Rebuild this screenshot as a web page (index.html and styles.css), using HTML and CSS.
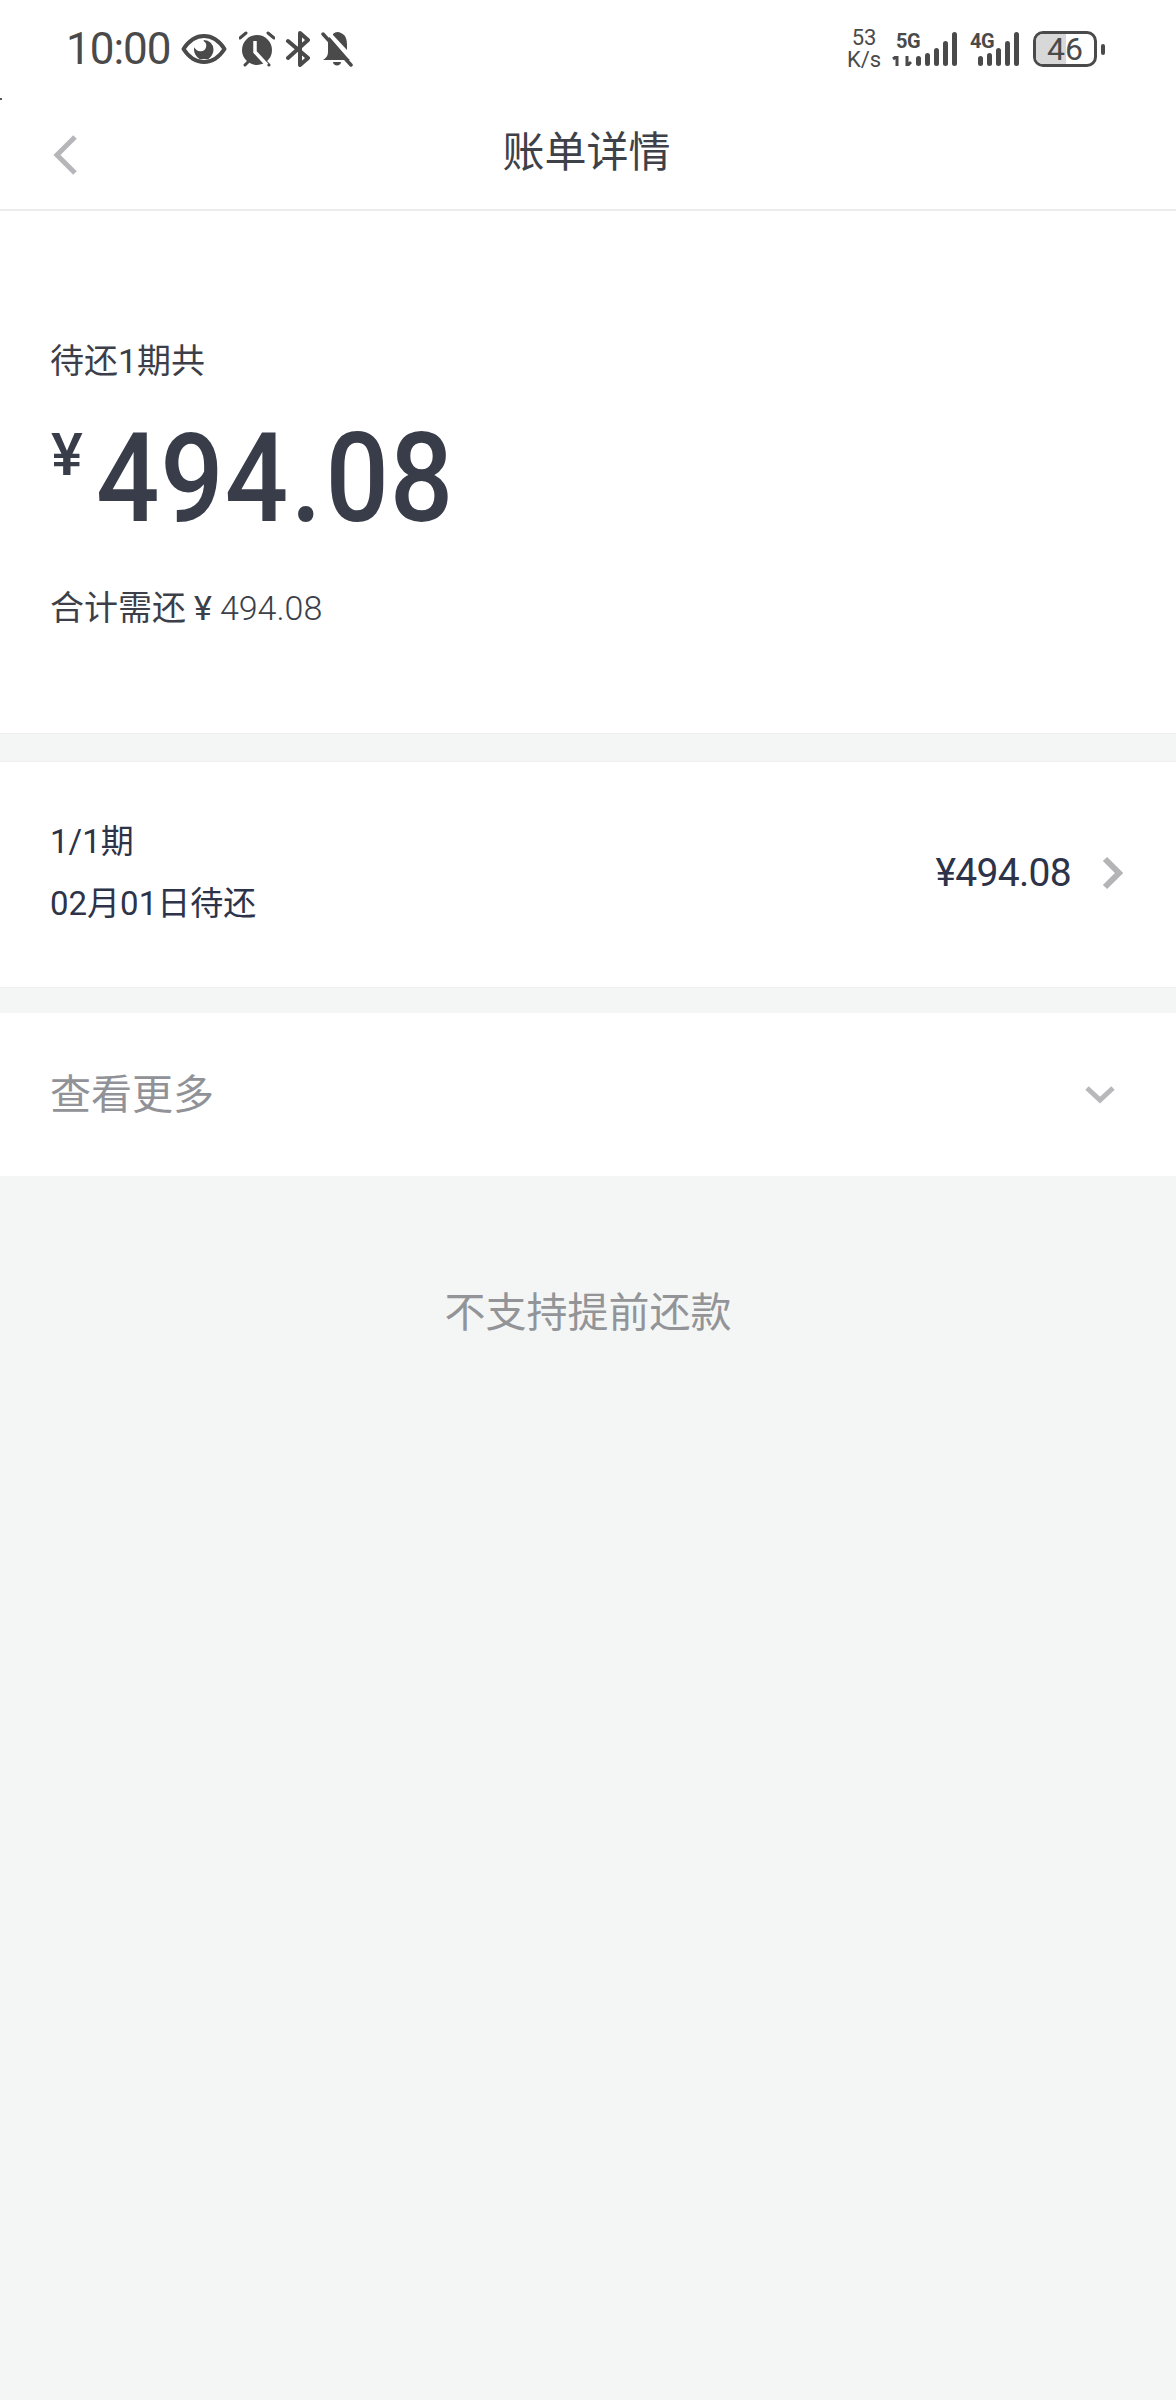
FILE: index.html
```html
<!DOCTYPE html>
<html lang="zh-CN">
<head>
<meta charset="utf-8">
<title>账单详情</title>
<link rel="stylesheet" href="styles.css">
</head>
<body>
<div class="page">
  <i class="tick"></i>
  <div class="status">
    <span class="time">10:00</span>
    <svg class="ic eye" viewBox="0 0 46 32" width="46" height="32"><path d="M2.500 16C8 7.500 15 3 23 3s15 4.500 20.500 13C38 24.500 31 29 23 29S8 24.500 2.500 16z" fill="none" stroke="#4a4a4a" stroke-width="4" stroke-linejoin="round"/><path d="M23 7a9.500 9.500 0 0 1 9.500 9.500c0 3.700-2 7-5 9.500h-9c-3.500-2.500-5.500-5.500-5.500-9.500 0-.8.100-1.500.3-2.200 1 2.400 3.200 3.900 5.700 3.900a5.500 5.500 0 0 0 3.500-10.200z" fill="#4a4a4a"/></svg>
    <svg class="ic alarm" viewBox="0 0 36 36" width="36" height="36"><circle cx="18" cy="19" r="15" fill="#4a4a4a"/><path d="M1 7l6-5M35 7l-6-5M6 34l3-3M30 34l-3-3" stroke="#4a4a4a" stroke-width="3" stroke-linecap="round"/><path d="M16 10v11l12 13" fill="none" stroke="#fff" stroke-width="3.500"/></svg>
    <svg class="ic bt" viewBox="0 0 24 36" width="24" height="36"><path d="M2 10l20 17-8 7V2l8 7L2 27" fill="none" stroke="#4a4a4a" stroke-width="4" stroke-linecap="round" stroke-linejoin="round"/></svg>
    <svg class="ic bell" viewBox="0 0 32 36" width="32" height="36"><path d="M7 11c0-2 .5-3.500 1.500-5L25 25c1 1.500 3 3 4 4H2c3-2 5-4 5-8zM12 3c2-2 5-3 8-1 5 2 6 7 6 12v5L12 4zM12 31h8c0 2-2 3.500-4 3.500S12 33 12 31z" fill="#4a4a4a"/><path d="M2 3l28 31" stroke="#4a4a4a" stroke-width="3.500" stroke-linecap="round"/></svg>
    <span class="spacer"></span>
    <div class="speed"><span>53</span><span>K/s</span></div>
    <div class="net net5">
      <span class="gen">5G</span>
      <svg class="arrows" viewBox="0 0 20 10" width="20" height="10"><path d="M5 0v10M1 3l4-3M15 0v10l4-4" fill="none" stroke="#4a4a4a" stroke-width="3"/></svg>
      <div class="bars"><i class="b1"></i><i class="b2"></i><i class="b3"></i><i class="b4"></i><i class="b5"></i></div>
    </div>
    <div class="net net4">
      <span class="gen">4G</span>
      <div class="bars"><i class="b1"></i><i class="b2"></i><i class="b3"></i><i class="b4"></i><i class="b5"></i></div>
    </div>
    <div class="battery"><div class="cell"><i class="fill"></i><span class="lvl">46</span></div><i class="nub"></i></div>
  </div>

  <header class="nav">
    <svg class="back" viewBox="0 0 26 42" width="26" height="42"><path d="M23 3L5 21l18 18" fill="none" stroke="#b6b6ba" stroke-width="5"/></svg>
    <h1 class="title">账单详情</h1>
  </header>

  <section class="summary">
    <p class="due">待还1期共</p>
    <div class="amount"><span class="yen">¥</span><span class="num">494<span class="dot">.</span>08</span></div>
    <p class="total">合计需还<span class="tyen">¥</span><span class="tnum">494.08</span></p>
  </section>

  <section class="bill">
    <div class="bill-left">
      <p class="period">1/1期</p>
      <p class="date">02月01日待还</p>
    </div>
    <span class="bill-amt">¥494.08</span>
    <svg class="chev-r" viewBox="0 0 22 34" width="22" height="34"><path d="M4 3l14 14L4 31" fill="none" stroke="#b4b4b6" stroke-width="6"/></svg>
  </section>

  <section class="more">
    <span class="more-label">查看更多</span>
    <svg class="chev-d" viewBox="0 0 30 20" width="30" height="20"><path d="M2 3l13 12L28 3" fill="none" stroke="#b8b8ba" stroke-width="5"/></svg>
  </section>

  <p class="notice">不支持提前还款</p>
</div>
</body>
</html>
```
FILE: styles.css
```css
* { box-sizing: border-box; }
html, body { margin: 0; padding: 0; }
body {
  background: #f4f6f6;
  font-family: Roboto, "Noto Sans CJK SC", sans-serif;
}
p, h1 { margin: 0; font-weight: 400; }
.page { position: relative; width: 1176px; height: 2400px; overflow: hidden; background: #f4f6f6; }
.tick { position: absolute; left: 0; top: 98px; width: 2px; height: 2px; background: #555; }

.status {
  height: 100px;
  background: #fff;
  display: flex;
  align-items: center;
  padding: 0 71px 2px 66px;
  color: #4a4a4a;
}
.time { font-size: 44px; font-weight: 400; letter-spacing: -1px; width: 102px; line-height: 50px; }
.ic { display: block; flex: none; }
.eye { margin-left: 13px; }
.alarm { margin-left: 12px; }
.bt { margin-left: 11px; }
.bell { margin-left: 11px; }
.spacer { flex: 1; }
.speed { display: flex; flex-direction: column; align-items: center; width: 36px; font-size: 22px; line-height: 22px; margin-right: 14px; }
.net { position: relative; height: 34px; }
.net5 { width: 61px; margin-right: 13px; }
.net4 { width: 49px; margin-right: 14px; }
.gen { position: absolute; left: 0; top: -1px; font-size: 20px; line-height: 20px; font-weight: 700; letter-spacing: -0.5px; }
.arrows { position: absolute; left: -4px; bottom: 0; }
.bars { position: absolute; right: 0; bottom: 0; display: flex; align-items: flex-end; gap: 4px; }
.bars i { display: block; width: 5px; background: #4a4a4a; border-radius: 3px; }
.bars .b1 { height: 10px; }
.bars .b2 { height: 13px; }
.bars .b3 { height: 18px; }
.bars .b4 { height: 25px; }
.bars .b5 { height: 34px; }
.battery { display: flex; align-items: center; gap: 4px; }
.cell { position: relative; width: 64px; height: 36px; border: 3px solid #4a4a4a; border-radius: 10px; overflow: hidden; display: flex; align-items: center; justify-content: center; }
.fill { position: absolute; left: 0; top: 0; bottom: 0; width: 30px; background: #d8d8d8; }
.lvl { position: relative; font-size: 32px; line-height: 30px; font-weight: 400; }
.nub { display: block; width: 4px; height: 11px; background: #4a4a4a; border-radius: 2px; }

.nav {
  height: 111px;
  background: #fff;
  border-bottom: 2px solid #ececec;
  display: flex;
  align-items: center;
  justify-content: center;
  position: relative;
}
.back { position: absolute; left: 52px; top: 34px; }
.title { font-size: 42px; line-height: 100px; color: #3e4149; padding: 0 3px 4px 0; }

.summary {
  height: 523px;
  background: #fff;
  border-bottom: 1px solid #eeeeee;
  padding: 125px 50px 0;
  color: #3c3f49;
}
.due { font-size: 34px; line-height: 50px; }
.amount { display: flex; align-items: flex-start; margin-top: 31px; color: #383d49; }
.yen { font-size: 60px; line-height: 70px; font-weight: 500; width: 46px; margin-top: 3px; padding-left: 1px; }
.num { display: block; font-size: 124px; line-height: 124px; font-weight: 500; letter-spacing: 1px; transform: scaleX(0.9); transform-origin: left center; white-space: nowrap; }
.dot { margin: 0 3px 0 2px; }
.total { font-size: 34px; line-height: 50px; margin-top: 42px; }
.tyen { margin: 0 8px; }
.tnum { font-weight: 300; }

.bill {
  margin-top: 27px;
  height: 227px;
  background: #fff;
  border-top: 1px solid #eeeeee;
  border-bottom: 1px solid #f0f0f0;
  display: flex;
  align-items: center;
  padding: 0 53px 3px 50px;
  color: #2d3348;
}
.bill-left { flex: 1; }
.period, .date { font-size: 33px; line-height: 62px; }
.bill-amt { font-size: 39px; font-weight: 400; line-height: 50px; letter-spacing: -0.7px; }
.chev-r { display: block; margin-left: 30px; }

.more {
  margin-top: 25px;
  height: 163px;
  background: #fff;
  display: flex;
  align-items: center;
  justify-content: space-between;
  padding: 0 61px 0 50px;
}
.more-label { font-size: 41px; color: #909297; line-height: 60px; }
.chev-d { display: block; }

.notice { margin-top: 107px; text-align: center; font-size: 41px; line-height: 60px; color: #929497; }
```
